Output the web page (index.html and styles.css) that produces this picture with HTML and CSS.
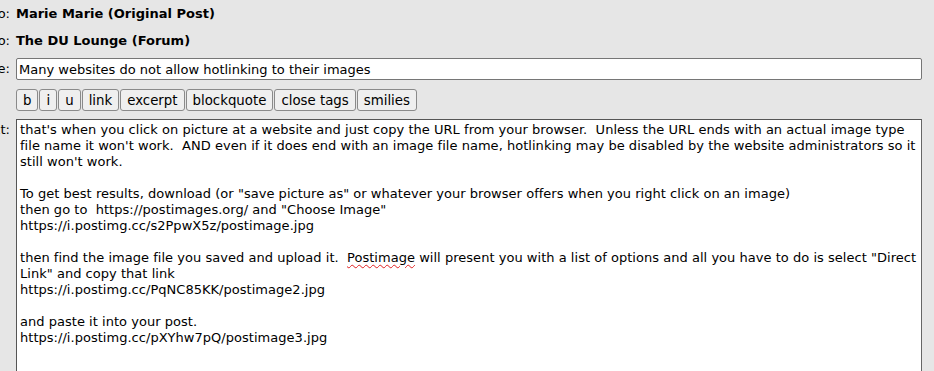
FILE: index.html
```html
<!DOCTYPE html>
<html lang="en">

<head>
    <meta charset="UTF-8">
    <title>Reply</title>
    <link rel="stylesheet" href="styles.css">
</head>

<body>

    <form class="reply-form">
        <div class="row row-info">
            <div class="label">Reply to:</div>
            <div class="field"><b>Marie Marie (Original Post)</b></div>
        </div>

        <div class="row row-info">
            <div class="label">Post to:</div>
            <div class="field"><b>The DU Lounge (Forum)</b></div>
        </div>

        <div class="row row-title">
            <div class="label">Title:</div>
            <div class="field">
                <input type="text" class="title-input" value="Many websites do not allow hotlinking to their images">
            </div>
        </div>

        <div class="row row-tools">
            <div class="label"></div>
            <div class="field toolbar">
                <button type="button">b</button>
                <button type="button">i</button>
                <button type="button">u</button>
                <button type="button">link</button>
                <button type="button">excerpt</button>
                <button type="button">blockquote</button>
                <button type="button">close tags</button>
                <button type="button">smilies</button>
            </div>
        </div>

        <div class="row row-text">
            <div class="label">Text:</div>
            <div class="field">
                <!-- div instead of textarea so the spellcheck squiggle can be shown; lines broken as the editor wrapped them -->
                <div class="text-box">that's when you click on picture at a website and just copy the URL from your browser.  Unless the URL ends with an actual image type
file name it won't work.  AND even if it does end with an image file name, hotlinking may be disabled by the website administrators so it
still won't work.

To get best results, download (or "save picture as" or whatever your browser offers when you right click on an image)
then go to  https://postimages.org/ and "Choose Image"
https://i.postimg.cc/s2PpwX5z/postimage.jpg

then find the image file you saved and upload it.  <span class="misspelled">Postimage</span> will present you with a list of options and all you have to do is select "Direct
Link" and copy that link
https://i.postimg.cc/PqNC85KK/postimage2.jpg

and paste it into your post.
https://i.postimg.cc/pXYhw7pQ/postimage3.jpg</div>
            </div>
        </div>
    </form>

</body>

</html>
```

FILE: styles.css
```css
* {
    box-sizing: border-box;
}

body {
    margin: 0;
    padding: 0;
    background-color: #e6e6e6;
    font-family: 'DejaVu Sans', Verdana, sans-serif;
    font-size: 13px;
    color: #000;
    overflow: hidden;
}

.reply-form {
    margin-left: -84px; /* page is scrolled, labels are cut off */
}

.row {
    display: flex;
    align-items: flex-start;
}

.label {
    width: 100px;
    flex-shrink: 0;
    text-align: right;
    padding-right: 6px;
    line-height: 16px;
}

.field {
    flex: 1;
    min-width: 0;
    padding-right: 12px;
}

.row-info {
    height: 27px;
    padding-top: 6px;
    line-height: 16px;
}

.row-title {
    padding-top: 4px;
}

.row-title .label {
    padding-top: 3px;
}

.title-input {
    display: block;
    width: 100%;
    height: 22px;
    padding: 1px 2px;
    border: 1px solid #767676;
    border-radius: 2px;
    background-color: white;
    font-family: inherit;
    font-size: 13px;
    color: #000;
    outline: none;
}

.row-tools {
    padding-top: 9px;
}

.toolbar {
    display: flex;
    gap: 1px;
}

.toolbar button {
    height: 22px;
    padding: 0 6px;
    border: 1px solid #8a8a8a;
    border-radius: 3px;
    background-color: #efefef;
    font-family: inherit;
    font-size: 13.33px;
    color: #000;
    cursor: pointer;
}

.row-text {
    padding-top: 8px;
}

.row-text .label {
    padding-top: 3px;
}

.text-box {
    height: 270px;
    padding: 2px 3px;
    border: 1px solid #555;
    border-right-color: #666;
    background-color: white;
    line-height: 16px;
    letter-spacing: 0.03px;
    white-space: pre;
    overflow: hidden;
}

.misspelled {
    text-decoration: underline wavy #e02020;
    text-decoration-thickness: 1px;
    text-underline-offset: 2px;
}
```
